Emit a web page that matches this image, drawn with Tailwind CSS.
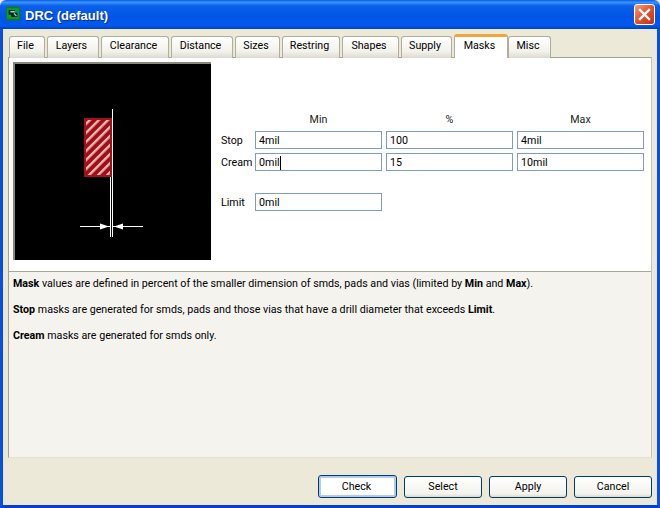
<!DOCTYPE html>
<html><head><meta charset="utf-8"><script src="https://cdn.jsdelivr.net/npm/@tailwindcss/browser@4"></script></head>
<body class="m-0 overflow-hidden bg-[#ece9d8]">
<div class="w-[660px] h-[508px] flex flex-col font-['Roboto',sans-serif] text-[10.7px] text-black bg-[#ece9d8] leading-none">
  <div class="h-[29px] shrink-0 flex items-center pl-[6px] pr-[5px] rounded-t-[6px] bg-[linear-gradient(180deg,#0a5ce0_0%,#3a93ff_8%,#0a60ea_20%,#0055e5_60%,#0359ee_88%,#0040c0_100%)]">
    <svg width="14" height="15" viewBox="0 0 16 16" class="mr-[5px] mt-[-2px]"><rect width="16" height="16" fill="#0a7a20"/><rect x="1" y="2" width="14" height="12" fill="#0b9a3a"/><path d="M3 4h7v3h3v5H6V9H3z" fill="#0c1c10"/><path d="M5 6h5M9 8l3 3" stroke="#7fd8ff" stroke-width="1.5"/></svg>
    <span class="font-bold text-[13px] text-white [text-shadow:1px_1px_0_#0030a0] font-['Liberation_Sans',sans-serif] mt-[1px]">DRC (default)</span>
    <div class="ml-auto w-[21px] h-[21px] rounded-[3px] border border-white bg-[linear-gradient(135deg,#f0a080,#e0532c_50%,#c23010)] flex items-center justify-center">
      <svg width="13" height="13" viewBox="0 0 13 13"><path d="M2 2l9 9M11 2l-9 9" stroke="#fff" stroke-width="2.4" stroke-linecap="square"/></svg>
    </div>
  </div>
  <div class="flex-1 flex flex-col border-x-[3px] border-[#0a50e0] border-b-[3px] border-b-[#0640c8] min-h-0">
    <div class="h-[29px] shrink-0 pl-[6px] flex items-end gap-[2px] relative z-10 mb-[-1px]">
      <div class="w-[36px] h-[22px] pb-[3px] pr-[3px] rounded-t-[3px] border border-b-0 border-[#b0ad9c] bg-[linear-gradient(180deg,#fff,#f2f1ea_70%,#dcdad0)] flex items-center justify-center">File</div>
      <div class="w-[52px] h-[22px] pb-[3px] pr-[3px] rounded-t-[3px] border border-b-0 border-[#b0ad9c] bg-[linear-gradient(180deg,#fff,#f2f1ea_70%,#dcdad0)] flex items-center justify-center">Layers</div>
      <div class="w-[68px] h-[22px] pb-[3px] pr-[3px] rounded-t-[3px] border border-b-0 border-[#b0ad9c] bg-[linear-gradient(180deg,#fff,#f2f1ea_70%,#dcdad0)] flex items-center justify-center">Clearance</div>
      <div class="w-[62px] h-[22px] pb-[3px] pr-[3px] rounded-t-[3px] border border-b-0 border-[#b0ad9c] bg-[linear-gradient(180deg,#fff,#f2f1ea_70%,#dcdad0)] flex items-center justify-center">Distance</div>
      <div class="w-[45px] h-[22px] pb-[3px] pr-[3px] rounded-t-[3px] border border-b-0 border-[#b0ad9c] bg-[linear-gradient(180deg,#fff,#f2f1ea_70%,#dcdad0)] flex items-center justify-center">Sizes</div>
      <div class="w-[58px] h-[22px] pb-[3px] pr-[3px] rounded-t-[3px] border border-b-0 border-[#b0ad9c] bg-[linear-gradient(180deg,#fff,#f2f1ea_70%,#dcdad0)] flex items-center justify-center">Restring</div>
      <div class="w-[57px] h-[22px] pb-[3px] pr-[3px] rounded-t-[3px] border border-b-0 border-[#b0ad9c] bg-[linear-gradient(180deg,#fff,#f2f1ea_70%,#dcdad0)] flex items-center justify-center">Shapes</div>
      <div class="w-[51px] h-[22px] pb-[3px] pr-[3px] rounded-t-[3px] border border-b-0 border-[#b0ad9c] bg-[linear-gradient(180deg,#fff,#f2f1ea_70%,#dcdad0)] flex items-center justify-center">Supply</div>
      <div class="w-[54px] h-[24px] mr-[-2px] pr-[3px] rounded-t-[3px] border-x border-[#b0ad9c] border-t-[3px] border-t-[#f0a63c] bg-white flex items-center justify-center pb-[3px]">Masks</div>
      <div class="w-[43px] h-[22px] pb-[3px] pr-[3px] rounded-t-[3px] border border-b-0 border-[#b0ad9c] bg-[linear-gradient(180deg,#fff,#f2f1ea_70%,#dcdad0)] flex items-center justify-center">Misc</div>
    </div>
    <div class="ml-[5px] mr-[5px] w-[644px] h-[401px] border border-[#a5a294] border-r-[#c8c5b4] border-b-[#e4e1d0] flex flex-col bg-[#f4f3ee] shrink-0">
      <div class="h-[214px] shrink-0 bg-white flex pl-[4px] pt-[4px] border-b border-[#aca899]">
        <div class="w-[198px] h-[198px] shrink-0 bg-black border-t-2 border-l-2 border-[#8a887c]">
          <svg width="196" height="196" viewBox="15 64 196 196" class="block">
            <defs><pattern id="h" width="6.4" height="6.4" patternUnits="userSpaceOnUse" patternTransform="rotate(45)"><rect width="6.4" height="6.4" fill="#9c0f1c"/><rect width="2.4" height="6.4" fill="#f8b8a8"/></pattern></defs>
            <rect x="85" y="119" width="26" height="57" fill="url(#h)" stroke="#a01020" stroke-width="2"/>
            <path d="M112.5 109V237M110.5 177V237" stroke="#fff" fill="none"/>
            <path d="M80 226.5h30M113 226.5h30" stroke="#fff"/>
            <path d="M100 223.5l9 3-9 3zM123 223.5l-9 3 9 3z" fill="#fff"/>
          </svg>
        </div>
        <div class="ml-[10px] mt-[50px] grid grid-cols-[30px_127px_127px_127px] grid-rows-[15px_18px_18px_14px_18px] gap-x-[4px] gap-y-[4px] items-center h-[98px] content-start">
          <div></div><div class="pt-[2px] text-center text-[#222]">Min</div><div class="pt-[2px] text-center text-[#222]">%</div><div class="pt-[2px] text-center text-[#222]">Max</div>
          <div class="pt-[2px]">Stop</div>
          <div class="h-[18px] border border-[#7f9db9] pl-[3px] pt-[2px] flex items-center">4mil</div>
          <div class="h-[18px] border border-[#7f9db9] pl-[3px] pt-[2px] flex items-center">100</div>
          <div class="h-[18px] border border-[#7f9db9] pl-[3px] pt-[2px] flex items-center">4mil</div>
          <div class="pt-[2px]">Cream</div>
          <div class="h-[18px] border border-[#7f9db9] pl-[3px] pt-[2px] flex items-center">0mil<span class="w-px h-[14px] bg-black"></span></div>
          <div class="h-[18px] border border-[#7f9db9] pl-[3px] pt-[2px] flex items-center">15</div>
          <div class="h-[18px] border border-[#7f9db9] pl-[3px] pt-[2px] flex items-center">10mil</div>
          <div class="col-span-4 h-[14px]"></div>
          <div class="pt-[2px]">Limit</div>
          <div class="h-[18px] border border-[#7f9db9] pl-[3px] pt-[2px] flex items-center">0mil</div>
        </div>
      </div>
      <div class="pl-[4px] pt-[5px] flex flex-col gap-[12px] leading-[14px]">
        <p><b>Mask</b> values are defined in percent of the smaller dimension of smds, pads and vias (limited by <b>Min</b> and <b>Max</b>).</p>
        <p><b>Stop</b> masks are generated for smds, pads and those vias that have a drill diameter that exceeds <b>Limit</b>.</p>
        <p><b>Cream</b> masks are generated for smds only.</p>
      </div>
    </div>
    <div class="flex-1 flex items-start justify-end pr-[5px] pt-[18px] gap-[7px]">
      <div class="w-[79px] h-[23px] mt-[-1px] pt-[2px] pr-[2px] rounded-[3px] border border-[#003c74] bg-white shadow-[inset_0_0_0_2px_#b4c8f0] flex items-center justify-center">Check</div>
      <div class="w-[78px] h-[22px] rounded-[3px] border border-[#003c74] bg-[linear-gradient(180deg,#fff,#f3f2ec_85%,#dcd8c8)] flex items-center justify-center">Select</div>
      <div class="w-[78px] h-[22px] rounded-[3px] border border-[#003c74] bg-[linear-gradient(180deg,#fff,#f3f2ec_85%,#dcd8c8)] flex items-center justify-center">Apply</div>
      <div class="w-[78px] h-[22px] rounded-[3px] border border-[#003c74] bg-[linear-gradient(180deg,#fff,#f3f2ec_85%,#dcd8c8)] flex items-center justify-center">Cancel</div>
    </div>
  </div>
</div>
</body></html>
